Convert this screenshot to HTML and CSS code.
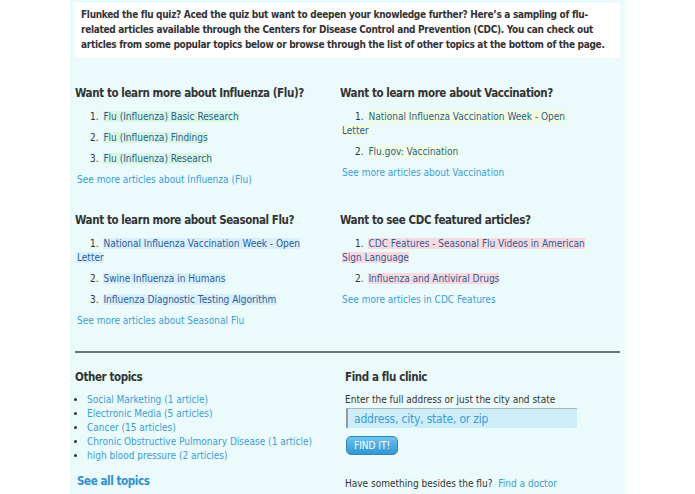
FILE: index.html
```html
<!DOCTYPE html>
<html lang="en">
<head>
<meta charset="utf-8">
<title>Flu articles</title>
<link rel="stylesheet" href="styles.css">
</head>
<body>
<div class="panel">
  <div class="intro">
    Flunked the flu quiz? Aced the quiz but want to deepen your knowledge further? Here’s a sampling of flu-related articles available through the Centers for Disease Control and Prevention (CDC). You can check out articles from some popular topics below or browse through the list of other topics at the bottom of the page.
  </div>

  <div class="topics">
    <section class="topic">
      <h2>Want to learn more about Influenza (Flu)?</h2>
      <ol class="articles green">
        <li><a href="#">Flu (Influenza) Basic Research</a></li>
        <li><a href="#">Flu (Influenza) Findings</a></li>
        <li><a href="#">Flu (Influenza) Research</a></li>
      </ol>
      <a class="more" href="#">See more articles about Influenza (Flu)</a>
    </section>
    <section class="topic">
      <h2>Want to learn more about Vaccination?</h2>
      <ol class="articles yellow">
        <li><a href="#">National Influenza Vaccination Week - Open Letter</a></li>
        <li><a href="#">Flu.gov: Vaccination</a></li>
      </ol>
      <a class="more" href="#">See more articles about Vaccination</a>
    </section>
    <section class="topic">
      <h2>Want to learn more about Seasonal Flu?</h2>
      <ol class="articles blue">
        <li><a href="#">National Influenza Vaccination Week - Open Letter</a></li>
        <li><a href="#">Swine Influenza in Humans</a></li>
        <li><a href="#">Influenza Diagnostic Testing Algorithm</a></li>
      </ol>
      <a class="more" href="#">See more articles about Seasonal Flu</a>
    </section>
    <section class="topic">
      <h2>Want to see CDC featured articles?</h2>
      <ol class="articles pink">
        <li><a href="#">CDC Features - Seasonal Flu Videos in American Sign Language</a></li>
        <li><a href="#">Influenza and Antiviral Drugs</a></li>
      </ol>
      <a class="more" href="#">See more articles in CDC Features</a>
    </section>
  </div>

  <hr class="divider">

  <div class="bottom">
    <section class="other">
      <h2>Other topics</h2>
      <ul class="bullets">
        <li><a href="#">Social Marketing (1 article)</a></li>
        <li><a href="#">Electronic Media (5 articles)</a></li>
        <li><a href="#">Cancer (15 articles)</a></li>
        <li><a href="#">Chronic Obstructive Pulmonary Disease (1 article)</a></li>
        <li><a href="#">high blood pressure (2 articles)</a></li>
      </ul>
      <a class="all" href="#">See all topics</a>
    </section>
    <section class="clinic">
      <h2>Find a flu clinic</h2>
      <p class="hint">Enter the full address or just the city and state</p>
      <input class="address" type="text" placeholder="address, city, state, or zip">
      <button class="find" type="button">FIND IT!</button>
      <p class="doctor">Have something besides the flu? <a href="#">Find a doctor</a></p>
    </section>
  </div>
</div>
</body>
</html>
```

FILE: styles.css
```css
html, body {
  margin: 0;
  padding: 0;
  background: #ffffff;
}

body {
  font-family: "DejaVu Sans Condensed", "DejaVu Sans", sans-serif;
  font-size: 10px;
  color: #333333;
}

a {
  text-decoration: none;
}

.panel {
  width: 545px;
  margin: 0 auto;
  padding: 3px 5px 0;
  background: #ebfbfb;
  min-height: 491px;
}

.intro {
  background: #ffffff;
  padding: 4px 6px 6px;
  font-weight: bold;
  font-size: 10px;
  letter-spacing: -0.3px;
  line-height: 15px;
  color: #333333;
}

.topics {
  display: grid;
  grid-template-columns: 265px 265px;
  row-gap: 26px;
  padding-top: 28px;
}

.topic {
  padding-right: 20px;
}

h2 {
  margin: 0;
  font-size: 11.5px;
  letter-spacing: -0.4px;
  line-height: 15px;
  font-weight: bold;
  color: #333333;
}

.articles {
  margin: 9px 0 0;
  padding: 0 0 0 2px;
  line-height: 14px;
  list-style-position: inside;
}

.articles li {
  margin-bottom: 7px;
  text-indent: 13px;
}

.articles li::marker {
  color: #333333;
}

.articles a {
  margin-left: 2px;
  color: #1f5f9b;
}

.green a { background: #daf6df; }
.yellow a { background: #f3fbdc; }
.blue a { background: #daeffb; }
.pink a { background: #fbd8de; }

.more {
  display: block;
  margin: 1px 0 0 2px;
  line-height: 14px;
  color: #3d9bd6;
}

.divider {
  margin: 23px 0 0;
  border: 0;
  height: 2px;
  background: #6b7375;
}

.bottom {
  display: grid;
  grid-template-columns: 270px 1fr;
  padding-top: 17px;
}

.bullets {
  margin: 8px 0 0;
  padding-left: 12px;
  line-height: 14px;
  list-style: disc;
}

.bullets a {
  color: #3d9bd6;
}

.all {
  display: block;
  margin-top: 11px;
  margin-left: 2px;
  font-weight: bold;
  font-size: 11.5px;
  letter-spacing: -0.4px;
  line-height: 15px;
  color: #2f8fd0;
}

.hint {
  margin: 8px 0 0;
  line-height: 14px;
}

.address {
  display: block;
  box-sizing: border-box;
  width: 231px;
  height: 20px;
  margin: 1px 0 0 1px;
  padding: 0 6px;
  border: 0;
  border-top: 1px solid #a9b9be;
  border-left: 2px solid #8f9ca0;
  background: #cdeef8;
  font-family: inherit;
  font-size: 12px;
  letter-spacing: -0.2px;
  color: #3d9bd6;
}

.address::placeholder {
  color: #3d9bd6;
}

.find {
  display: block;
  margin: 8px 0 0 1px;
  height: 19px;
  width: 52px;
  padding: 0;
  border: 1px solid #2f86bd;
  border-radius: 5px;
  background: linear-gradient(#6cc3ee, #3396d3);
  color: #ffffff;
  font-family: inherit;
  font-size: 10px;
}

.doctor {
  margin: 22px 0 0;
  line-height: 14px;
}

.doctor a {
  margin-left: 3px;
  color: #3d9bd6;
}
```
